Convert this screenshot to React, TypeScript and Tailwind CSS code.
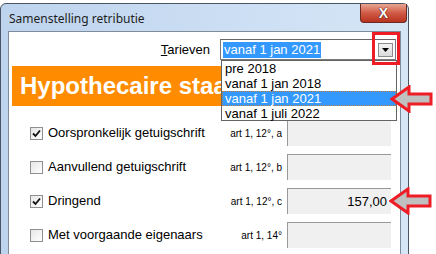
import React from 'react';

const rows = [
  { label: 'Oorspronkelijk getuigschrift', art: 'art 1, 12°, a', checked: true, value: '' },
  { label: 'Aanvullend getuigschrift', art: 'art 1, 12°, b', checked: false, value: '' },
  { label: 'Dringend', art: 'art 1, 12°, c', checked: true, value: '157,00' },
  { label: 'Met voorgaande eigenaars', art: 'art 1, 14°', checked: false, value: '' },
];

const options = ['pre 2018', 'vanaf 1 jan 2018', 'vanaf 1 jan 2021', 'vanaf 1 juli 2022'];

function CheckBox({ checked }: { checked: boolean }) {
  return (
    <span className="w-[13px] h-[13px] border border-[#8f8f8f] bg-gradient-to-br from-[#e6e6e6] to-white flex items-center justify-center shrink-0">
      {checked && (
        <svg width="9" height="9" viewBox="0 0 9 9">
          <path d="M1 4.5 L3.5 7 L8 1.5" stroke="#111" strokeWidth="1.8" fill="none" />
        </svg>
      )}
    </span>
  );
}

function Arrow({ className }: { className: string }) {
  return (
    <svg className={className} width="44" height="28" viewBox="0 0 44 28">
      <polygon
        points="2,14 19,2 19,9 41,9 41,19 19,19 19,26"
        fill="#c0c0c0"
        stroke="#ee1c24"
        strokeWidth="3"
        strokeLinejoin="miter"
      />
    </svg>
  );
}

export default function App() {
  return (
    <div className="w-[436px] h-[254px] overflow-hidden bg-white relative font-['Liberation_Sans',Arial,sans-serif] text-black">
      <div className="mt-[3px] w-[409px] h-[260px] rounded-t-[6px] border border-[#4a5564] bg-gradient-to-r from-[#bed4ee] to-[#d6e6f7] px-[7px] flex flex-col">
        {/* title bar */}
        <div className="h-[27px] flex items-start justify-between shrink-0">
          <span className="mt-[6px] ml-[1px] text-[12px] font-['Noto_Sans',sans-serif] text-[#1e1e1e]">
            Samenstelling retributie
          </span>
          <div className="w-[47px] h-[19px] -mr-[6px] rounded-b-[4px] border border-t-0 border-[#6b2a22] bg-gradient-to-b from-[#e8a493] via-[#cf5a45] to-[#b8321f] flex items-center justify-center">
            <span className="text-white font-bold text-[14px] leading-none [text-shadow:0_0_1px_#3a0a05,0_0_1px_#3a0a05]">X</span>
          </div>
        </div>

        {/* client area */}
        <div className="flex-1 bg-white border border-[#7f8c9c] relative isolate">
          <div className="flex items-center h-[21px] mt-[7px]">
            <span className="w-[201px] text-right text-[13px]">
              <span className="underline">T</span>arieven
            </span>
            <div className="ml-[10px] w-[176px] h-[21px] border border-[#7a7a7a] border-t-[#666] flex items-center px-[2px]">
              <span className="bg-[#3399ff] text-white text-[13px] leading-[16px] px-[1px]">vanaf 1 jan 2021</span>
              <span className="ml-auto w-[15px] h-[14px] border border-[#8c8c8c] bg-gradient-to-b from-[#f4f4f4] to-[#dcdcdc] flex items-center justify-center">
                <svg width="7" height="4" viewBox="0 0 7 4">
                  <polygon points="0,0 7,0 3.5,4" fill="#000" />
                </svg>
              </span>
            </div>
          </div>

          <div className="mt-[6px] ml-[3px] w-[382px] h-[40px] bg-[#ff8c00] flex items-center pl-[8px] overflow-hidden">
            <span className="text-white font-bold text-[24px] whitespace-nowrap">Hypothecaire staat</span>
          </div>

          <div className="mt-[14px] flex flex-col gap-[8px]">
            {rows.map((r) => (
              <div key={r.label} className="flex items-center h-[26px]">
                <div className="ml-[21px] w-[200px] flex items-center gap-[5px]">
                  <CheckBox checked={r.checked} />
                  <span className="text-[13px] whitespace-nowrap">{r.label}</span>
                </div>
                <span className="w-[52px] text-right text-[10px] whitespace-nowrap">{r.art}</span>
                <div className="ml-[5px] w-[104px] h-[26px] bg-[#f0f0f0] border-t border-l border-[#999] flex items-center justify-end pr-[4px] text-[13px]">
                  {r.value}
                </div>
              </div>
            ))}
          </div>

          {/* opened dropdown list */}
          <div className="absolute z-10 left-[212px] top-[28px] w-[176px] h-[61px] bg-white border border-[#646464] text-[13px] leading-[15px]">
            {options.map((o) => (
              <div
                key={o}
                className={
                  o === 'vanaf 1 jan 2021'
                    ? 'h-[15px] px-[2px] bg-[#3399ff] text-white border border-dotted border-[#c08040] leading-[13px]'
                    : 'h-[15px] px-[3px]'
                }
              >
                {o}
              </div>
            ))}
          </div>
        </div>
      </div>

      {/* red highlight box around dropdown button */}
      <div className="absolute z-20 left-[372px] top-[32px] w-[28px] h-[33px] border-[3px] border-[#ee1c24]" />
      <Arrow className="absolute z-20 left-[390px] top-[85px]" />
      <Arrow className="absolute z-20 left-[389px] top-[187px]" />
    </div>
  );
}
